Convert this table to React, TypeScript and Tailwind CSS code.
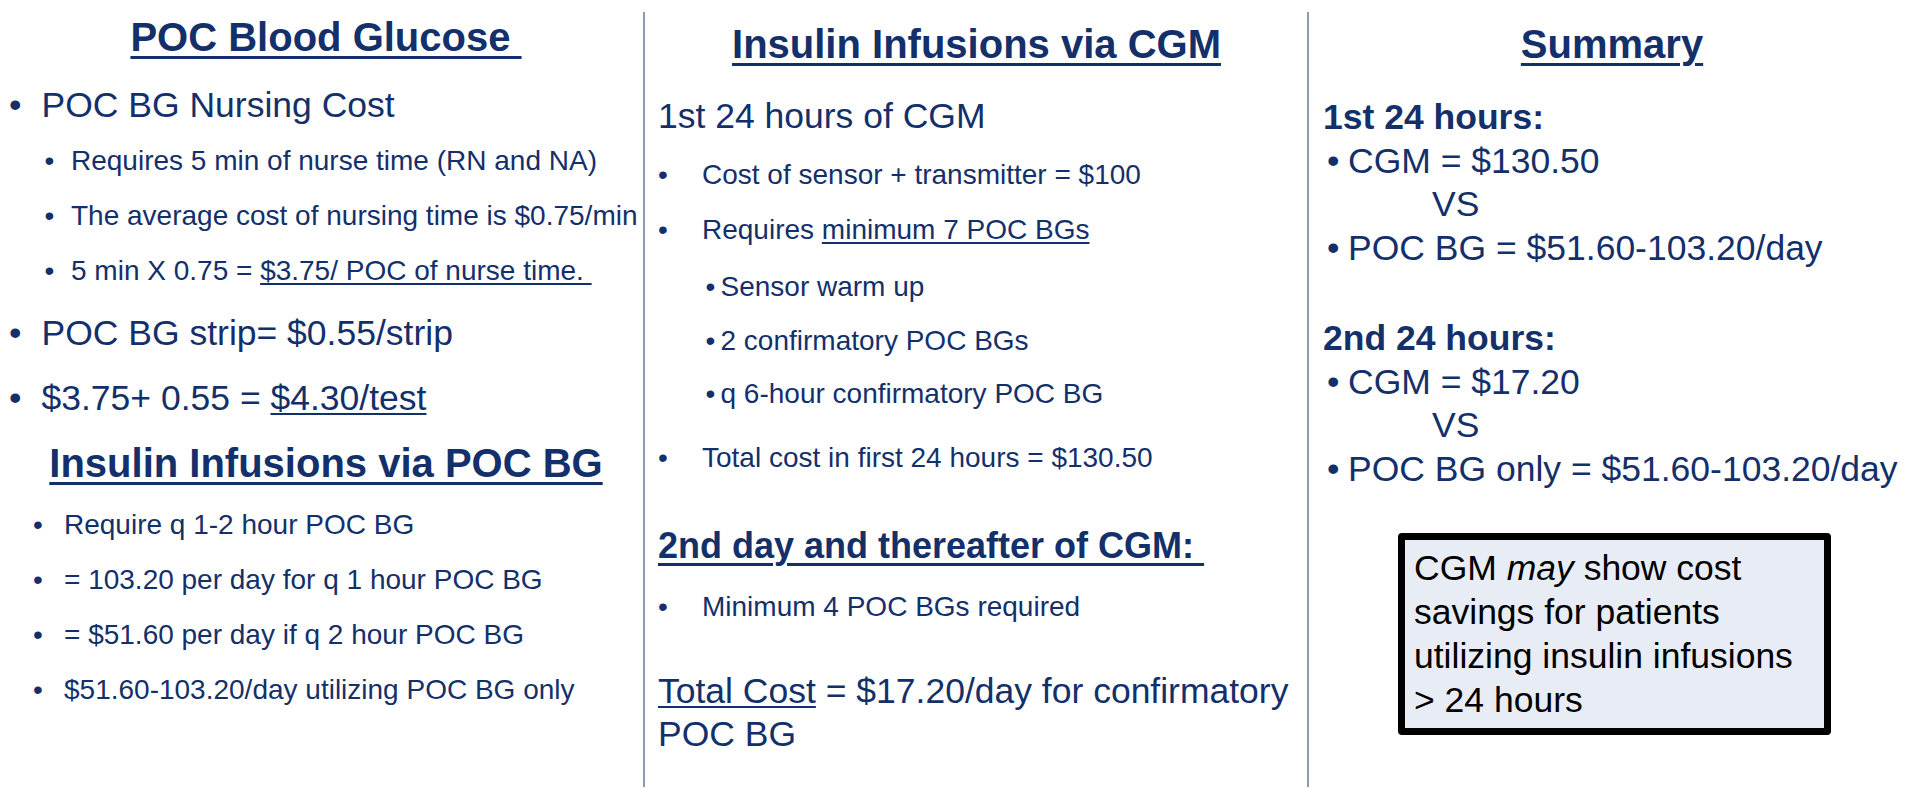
import React from "react";

const navy = "text-[#14306a]";

function Big({ children }: { children: React.ReactNode }) {
  return (
    <div className="flex whitespace-nowrap text-[35.5px] leading-[44px]">
      <span className="w-[32.5px] shrink-0">•</span>
      <span>{children}</span>
    </div>
  );
}

function Sub({ children, pad, w }: { children: React.ReactNode; pad: string; w: string }) {
  return (
    <div className={`flex whitespace-nowrap text-[28px] leading-[40px] ${pad}`}>
      <span className={`${w} shrink-0`}>•</span>
      <span>{children}</span>
    </div>
  );
}

function Dot({ children }: { children: React.ReactNode }) {
  return (
    <div className="flex pl-[4px]">
      <span className="w-[21px] shrink-0">•</span>
      <span>{children}</span>
    </div>
  );
}

export default function App() {
  return (
    <div className={`flex h-[800px] w-[1911px] bg-white font-['Liberation_Sans',Arial,sans-serif] ${navy}`}>
      {/* Column 1 */}
      <div className="w-[643px] shrink-0 pl-[9px]">
        <h2 className="mt-[13px] text-center text-[40px] font-bold leading-[48px]">
          <span className="underline decoration-[3px] underline-offset-[5px]">POC Blood Glucose&nbsp;</span>
        </h2>
        <div className="mt-[22px]">
          <Big>POC BG Nursing Cost</Big>
        </div>
        <div className="mt-[14px] flex flex-col gap-[15px]">
          <Sub pad="pl-[35.5px]" w="w-[26.5px]">Requires 5 min of nurse time (RN and NA)</Sub>
          <Sub pad="pl-[35.5px]" w="w-[26.5px]">The average cost of nursing time is $0.75/min</Sub>
          <Sub pad="pl-[35.5px]" w="w-[26.5px]">
            5 min X 0.75 ={" "}
            <span className="underline decoration-[2px] underline-offset-[3px]">$3.75/ POC of nurse time.&nbsp;</span>
          </Sub>
        </div>
        <div className="mt-[20px]">
          <Big>POC BG strip= $0.55/strip</Big>
        </div>
        <div className="mt-[21px]">
          <Big>
            $3.75+ 0.55 = <span className="underline decoration-[2px] underline-offset-[3px]">$4.30/test</span>
          </Big>
        </div>
        <h2 className="mt-[19px] text-center text-[40px] font-bold leading-[48px]">
          <span className="underline decoration-[3px] underline-offset-[5px]">Insulin Infusions via POC BG</span>
        </h2>
        <div className="mt-[18px] flex flex-col gap-[15px]">
          <Sub pad="pl-[24px]" w="w-[31px]">Require q 1-2 hour POC BG</Sub>
          <Sub pad="pl-[24px]" w="w-[31px]">= 103.20 per day for q 1 hour POC BG</Sub>
          <Sub pad="pl-[24px]" w="w-[31px]">= $51.60 per day if q 2 hour POC BG</Sub>
          <Sub pad="pl-[24px]" w="w-[31px]">$51.60-103.20/day utilizing POC BG only</Sub>
        </div>
      </div>

      <div className="mb-[13px] mt-[12px] w-[2px] shrink-0 bg-[#8a9ab5]" />

      {/* Column 2 */}
      <div className="w-[662px] shrink-0 pl-[13px] pr-[12px]">
        <h2 className="mt-[20px] text-center text-[40px] font-bold leading-[48px]">
          <span className="underline decoration-[3px] underline-offset-[5px]">Insulin Infusions via CGM</span>
        </h2>
        <div className="mt-[26px] text-[35.5px] leading-[44px]">1st 24 hours of CGM</div>
        <div className="mt-[17px] flex flex-col gap-[14.5px]">
          <Sub pad="pl-0" w="w-[44px]">Cost of sensor + transmitter = $100</Sub>
          <Sub pad="pl-0" w="w-[44px]">
            Requires{" "}
            <span className="underline decoration-[2px] underline-offset-[3px]">minimum 7 POC BGs</span>
          </Sub>
          <div className="mt-[3px] flex flex-col gap-[13.5px]">
            <Sub pad="pl-[47.5px]" w="w-[15px]">Sensor warm up</Sub>
            <Sub pad="pl-[47.5px]" w="w-[15px]">2 confirmatory POC BGs</Sub>
            <Sub pad="pl-[47.5px]" w="w-[15px]">q 6-hour confirmatory POC BG</Sub>
          </div>
          <div className="mt-[9.5px]">
            <Sub pad="pl-0" w="w-[44px]">Total cost in first 24 hours = $130.50</Sub>
          </div>
        </div>
        <div className="mt-[45.5px] whitespace-nowrap text-[36px] font-bold leading-[44px]">
          <span className="underline decoration-[3px] underline-offset-[5px]">2nd day and thereafter of CGM:&nbsp;</span>
        </div>
        <div className="mt-[19px]">
          <Sub pad="pl-0" w="w-[44px]">Minimum 4 POC BGs required</Sub>
        </div>
        <div className="mt-[43px] whitespace-nowrap text-[35.5px] leading-[43px]">
          <span className="underline decoration-[2px] underline-offset-[3px]">Total Cost</span> = $17.20/day for
          confirmatory
          <br />
          POC BG
        </div>
      </div>

      <div className="mb-[13px] mt-[12px] w-[2px] shrink-0 bg-[#8a9ab5]" />

      {/* Column 3 */}
      <div className="flex-1 pl-[14px] pr-[10px]">
        <h2 className="mt-[20px] text-center text-[40px] font-bold leading-[48px]">
          <span className="underline decoration-[3px] underline-offset-[5px]">Summary</span>
        </h2>
        <div className="mt-[28px] whitespace-nowrap text-[35.5px] leading-[43.5px]">
          <div className="font-bold">1st 24 hours:</div>
          <Dot>CGM = $130.50</Dot>
          <div className="pl-[109px]">VS</div>
          <Dot>POC BG = $51.60-103.20/day</Dot>
        </div>
        <div className="mt-[47px] whitespace-nowrap text-[35.5px] leading-[43.5px]">
          <div className="font-bold">2nd 24 hours:</div>
          <Dot>CGM = $17.20</Dot>
          <div className="pl-[109px]">VS</div>
          <Dot>POC BG only = $51.60-103.20/day</Dot>
        </div>
        <div className="ml-[75px] mt-[42px] w-[433px] rounded-[4px] border-[7px] border-black bg-[#e8ecf4] pb-[6px] pl-[9px] pt-[6px] text-[35.5px] leading-[44px] whitespace-nowrap text-black">
          CGM <span className="italic">may</span> show cost
          <br />
          savings for patients
          <br />
          utilizing insulin infusions
          <br />
          &gt; 24 hours
        </div>
      </div>
    </div>
  );
}
